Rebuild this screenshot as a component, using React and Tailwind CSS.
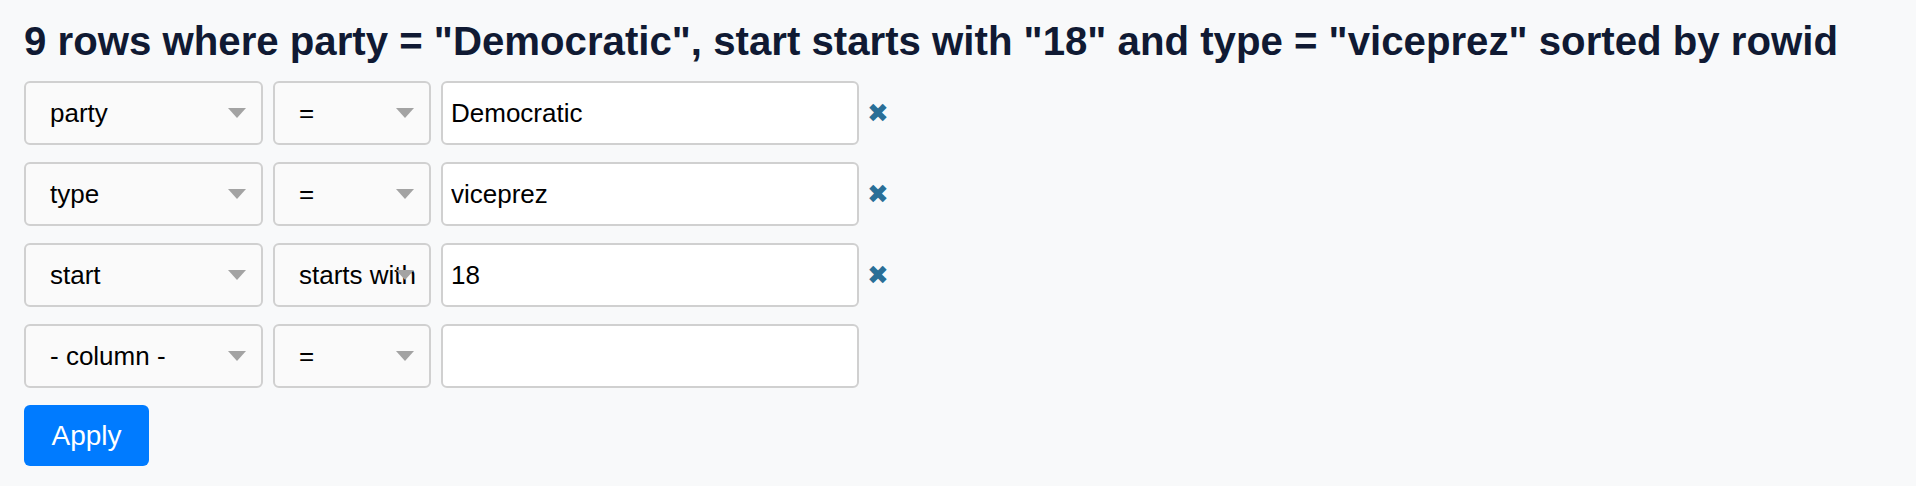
import React from 'react';

const filters = [
  { column: 'party', op: '=', value: 'Democratic', removable: true },
  { column: 'type', op: '=', value: 'viceprez', removable: true },
  { column: 'start', op: 'starts with', value: '18', removable: true },
  { column: '- column -', op: '=', value: '', removable: false },
];

const Arrow = () => (
  <svg
    className="absolute right-[15px] top-1/2 -translate-y-1/2"
    width="18"
    height="10"
    viewBox="0 0 18 10"
  >
    <path d="M0 0 H18 L9 10 Z" fill="#a3a3a3" />
  </svg>
);

const FakeSelect = ({ label, width }) => (
  <div
    className={`relative flex items-center h-[64px] ${width} pl-[24px] bg-[#fafafa] border-2 border-[#d0d0d0] rounded-[6px] text-[26px] text-black whitespace-nowrap overflow-hidden`}
  >
    {label}
    <Arrow />
  </div>
);

const App = () => {
  return (
    <div
      className="min-h-[486px] bg-[#f8f9fa] pl-[24px] pt-[22px]"
      style={{ fontFamily: '"Liberation Sans", Arial, sans-serif' }}
    >
      <h3 className="text-[40.2px] leading-none font-bold text-[#101a33] whitespace-nowrap">
        9 rows where party = "Democratic", start starts with "18" and type = "viceprez" sorted by rowid
      </h3>

      <div className="mt-[19px] flex flex-col gap-[17px]">
        {filters.map((f, i) => (
          <div key={i} className="flex items-center gap-[10px]">
            <FakeSelect label={f.column} width="w-[239px]" />
            <FakeSelect label={f.op} width="w-[158px]" />
            <input
              type="text"
              defaultValue={f.value}
              className="h-[64px] w-[418px] px-[8px] bg-white border-2 border-[#d0d0d0] rounded-[6px] text-[26px] text-black outline-none"
            />
            {f.removable && (
              <button className="text-[#2a6f97] text-[26px] leading-none -ml-[2px]">✖</button>
            )}
          </div>
        ))}
      </div>

      <button className="mt-[17px] h-[61px] w-[125px] bg-[#007bff] text-white text-[28px] rounded-[6px]">
        Apply
      </button>
    </div>
  );
};

export default App;
